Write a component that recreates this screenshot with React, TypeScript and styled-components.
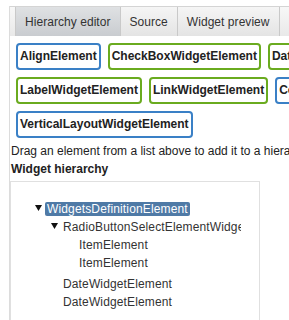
import styled, { createGlobalStyle } from 'styled-components';

const GlobalStyle = createGlobalStyle`
  html, body {
    margin: 0;
    padding: 0;
    overflow: hidden;
    background: #fff;
  }
  body {
    font-family: "Liberation Sans", Arial, sans-serif;
    font-size: 12px;
    color: #222;
  }
`;

const Page = styled.div`
  padding: 6px 0 0 9px;
`;

const Panel = styled.div`
  width: 600px;
  border-left: 1px solid #dcdcdc;
  min-height: 330px;
`;

const TabBar = styled.div`
  display: flex;
  height: 29px;
  padding-left: 5px;
  border-top: 1px solid #d4d4d4;
  background: linear-gradient(#f7f7f7, #e9e9e9);
`;

const Tab = styled.div<{ $active?: boolean; $first?: boolean }>`
  display: flex;
  align-items: center;
  padding: 0 9px;
  color: #333;
  letter-spacing: 0.05px;
  border-right: 1px solid #c9c9c9;
  border-left: ${(p) => (p.$first ? '1px solid #c9c9c9' : 'none')};
  background: ${(p) =>
    p.$active
      ? 'linear-gradient(#dfe1e3, #c9ccd0)'
      : 'linear-gradient(#f5f5f5, #e4e4e4)'};
  white-space: nowrap;
`;

const ElementList = styled.div`
  display: flex;
  flex-wrap: wrap;
  gap: 7px;
  width: 430px;
  padding: 7px 0 0 6px;
`;

const ElementButton = styled.div<{ $kind: 'layout' | 'widget' }>`
  height: 27px;
  box-sizing: border-box;
  padding: 0 2px;
  line-height: 23px;
  border: 2px solid ${(p) => (p.$kind === 'layout' ? '#3a80c6' : '#6aab1f')};
  border-radius: 4px;
  background: #fff;
  font-weight: bold;
  color: #222;
  white-space: nowrap;
`;

const Hint = styled.div`
  margin-top: 4px;
  padding-left: 1px;
  line-height: 18px;
  white-space: nowrap;
`;

const Heading = styled.div`
  padding-left: 1px;
  line-height: 18px;
  font-weight: bold;
`;

const TreeBox = styled.div`
  margin-top: 3px;
  width: 250px;
  height: 160px;
  box-sizing: border-box;
  border: 1px solid #e0e0e0;
  padding: 18px 18px 0 0;
`;

const TreeClip = styled.div`
  overflow: hidden;
`;

const Row = styled.div<{ $level: number; $gapAfter?: boolean }>`
  display: flex;
  align-items: center;
  height: 18px;
  padding-left: ${(p) => 6 + p.$level * 16}px;
  margin-bottom: ${(p) => (p.$gapAfter ? 3 : 0)}px;
  white-space: nowrap;
`;

const Toggle = styled.span`
  display: flex;
  width: 12px;
  flex: none;
  padding-left: 2px;
  box-sizing: border-box;
  margin-top: -3px;
`;

const Label = styled.span<{ $selected?: boolean }>`
  display: inline-block;
  line-height: 14px;
  padding: 0 2px;
  border-radius: 2px;
  letter-spacing: 0.14px;
  color: ${(p) => (p.$selected ? '#fff' : '#333')};
  background: ${(p) => (p.$selected ? '#4f7aa6' : 'transparent')};
`;

const Arrow = () => (
  <svg width="7" height="6" viewBox="0 0 7 6">
    <polygon points="0,0 7,0 3.5,6" fill="#111" />
  </svg>
);

const elements: { name: string; kind: 'layout' | 'widget' }[] = [
  { name: 'AlignElement', kind: 'layout' },
  { name: 'CheckBoxWidgetElement', kind: 'widget' },
  { name: 'DateWidgetElement', kind: 'widget' },
  { name: 'LabelWidgetElement', kind: 'widget' },
  { name: 'LinkWidgetElement', kind: 'widget' },
  { name: 'ContainerElement', kind: 'layout' },
  { name: 'VerticalLayoutWidgetElement', kind: 'layout' },
];

const tree = [
  { label: 'WidgetsDefinitionElement', level: 1, open: true, selected: true },
  { label: 'RadioButtonSelectElementWidget', level: 2, open: true },
  { label: 'ItemElement', level: 3 },
  { label: 'ItemElement', level: 3, gapAfter: true },
  { label: 'DateWidgetElement', level: 2 },
  { label: 'DateWidgetElement', level: 2 },
];

export default function App() {
  return (
    <>
      <GlobalStyle />
      <Page>
        <Panel>
          <TabBar>
            <Tab $active $first>Hierarchy editor</Tab>
            <Tab>Source</Tab>
            <Tab>Widget preview</Tab>
          </TabBar>
          <ElementList>
            {elements.map((el) => (
              <ElementButton key={el.name} $kind={el.kind}>
                {el.name}
              </ElementButton>
            ))}
          </ElementList>
          <Hint>Drag an element from a list above to add it to a hierarchy below.</Hint>
          <Heading>Widget hierarchy</Heading>
          <TreeBox>
            <TreeClip>
              {tree.map((node, i) => (
                <Row key={i} $level={node.level} $gapAfter={node.gapAfter}>
                  <Toggle>{node.open ? <Arrow /> : null}</Toggle>
                  <Label $selected={node.selected}>{node.label}</Label>
                </Row>
              ))}
            </TreeClip>
          </TreeBox>
        </Panel>
      </Page>
    </>
  );
}
